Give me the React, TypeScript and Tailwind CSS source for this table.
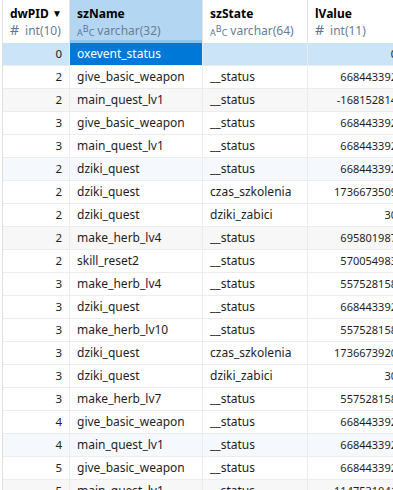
import React from 'react'

const rows: [string, string, string, string][] = [
  ['0', 'oxevent_status', '', '0'],
  ['2', 'give_basic_weapon', '__status', '668443392'],
  ['2', 'main_quest_lv1', '__status', '-168152814'],
  ['3', 'give_basic_weapon', '__status', '668443392'],
  ['3', 'main_quest_lv1', '__status', '668443392'],
  ['2', 'dziki_quest', '__status', '668443392'],
  ['2', 'dziki_quest', 'czas_szkolenia', '1736673509'],
  ['2', 'dziki_quest', 'dziki_zabici', '30'],
  ['2', 'make_herb_lv4', '__status', '695801987'],
  ['2', 'skill_reset2', '__status', '570054983'],
  ['3', 'make_herb_lv4', '__status', '557528158'],
  ['3', 'dziki_quest', '__status', '668443392'],
  ['3', 'make_herb_lv10', '__status', '557528158'],
  ['3', 'dziki_quest', 'czas_szkolenia', '1736673920'],
  ['3', 'dziki_quest', 'dziki_zabici', '30'],
  ['3', 'make_herb_lv7', '__status', '557528158'],
  ['4', 'give_basic_weapon', '__status', '668443392'],
  ['4', 'main_quest_lv1', '__status', '668443392'],
  ['5', 'give_basic_weapon', '__status', '668443392'],
  ['5', 'main_quest_lv1', '__status', '1147531041'],
]

// rows that get the faint gray / blue tint in the grid
const grayRows = [2, 8, 19]
const blueRows = [5, 17]

function TypeAbc() {
  return (
    <span className="inline-flex items-end text-[9px] leading-none text-[#5b7595] mr-[3px]">
      <span className="translate-y-[2px]">A</span>
      <span className="-translate-y-[2px]">B</span>
      <span className="translate-y-[2px]">C</span>
    </span>
  )
}

function TypeNum() {
  return <span className="text-[14px] leading-none text-[#5b7595] mr-[6px]">#</span>
}

function Header({ name, type, kind, active, sort }: { name: string; type: string; kind: 'num' | 'abc'; active?: boolean; sort?: boolean }) {
  return (
    <div className={`relative h-[43px] flex flex-col justify-center px-[7px] border-r border-[#e3e3e3] ${active ? 'bg-[#b3d7f3]' : 'bg-white'}`}>
      <div className="flex items-center justify-between font-bold text-[12px] text-black leading-[17px]">
        <span>{name}</span>
        {sort && <span className="text-[10px] leading-none">▼</span>}
      </div>
      <div className="flex items-center text-[12px] text-[#6b7c93] leading-[17px] whitespace-nowrap">
        {kind === 'num' ? <TypeNum /> : <TypeAbc />}
        <span>{type}</span>
      </div>
      {active && <div className="absolute left-0 right-0 bottom-0 h-[3px] bg-[#8ec3ec]" />}
    </div>
  )
}

export default function App() {
  return (
    <div className="w-[393px] h-[490px] overflow-hidden bg-white font-['Noto_Sans',sans-serif] text-[12px] text-[#1e1e1e]">
      <div className="flex w-[420px]">
        <div className="w-[3px] shrink-0 border-r border-[#e0e0e0]" />
        <div className="grid grid-cols-[67px_133px_105px_90px] flex-1">
          <Header name="dwPID" type="int(10)" kind="num" sort />
          <Header name="szName" type="varchar(32)" kind="abc" active />
          <Header name="szState" type="varchar(64)" kind="abc" />
          <Header name="lValue" type="int(11)" kind="num" />
          {rows.map((r, i) => {
            const sel = i === 0
            const bg = sel ? 'bg-[#cce4f7]' : grayRows.includes(i) ? 'bg-[#f7f7f7]' : blueRows.includes(i) ? 'bg-[#f5f9fd]' : 'bg-white'
            const cell = `h-[23px] flex items-center border-r border-b border-[#ececec] whitespace-nowrap overflow-hidden`
            return (
              <React.Fragment key={i}>
                <div className={`${cell} ${bg} justify-end pr-[7px] text-[11.5px]`}>{r[0]}</div>
                <div className={`${cell} ${sel ? 'bg-[#0078d7] text-white' : bg} pl-[7px]`}>{r[1]}</div>
                <div className={`${cell} ${bg} pl-[7px]`}>{r[2]}</div>
                <div className={`${cell} ${bg} justify-end text-[11px]`}>{r[3]}</div>
              </React.Fragment>
            )
          })}
        </div>
      </div>
    </div>
  )
}
